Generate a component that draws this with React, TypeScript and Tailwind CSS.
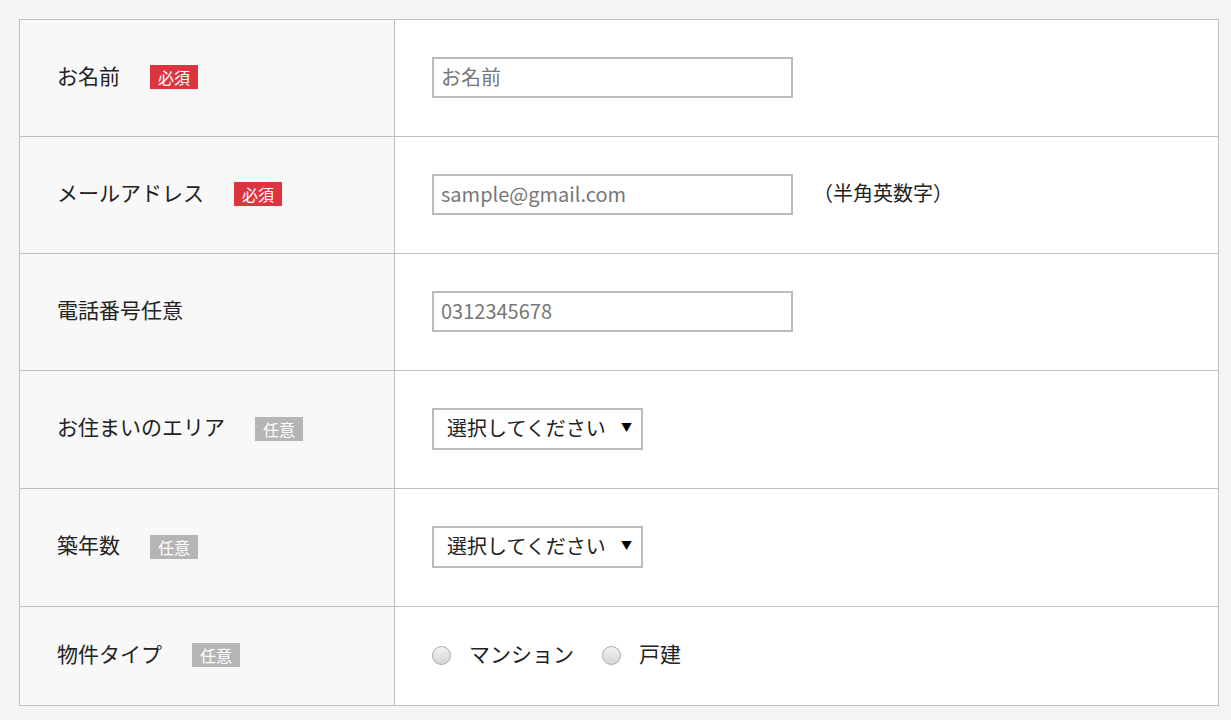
import React from "react";

type Badge = "required" | "optional" | null;

interface Row {
  label: string;
  badge: Badge;
  height: string;
  field: React.ReactNode;
}

function Tag({ kind }: { kind: Badge }) {
  if (!kind) return null;
  return (
    <span
      className={`ml-[30px] inline-block h-6 px-2 text-[16px] leading-6 text-white ${
        kind === "required" ? "bg-[#dc3540]" : "bg-[#b5b5b5]"
      }`}
    >
      {kind === "required" ? "必須" : "任意"}
    </span>
  );
}

function TextInput({ placeholder }: { placeholder: string }) {
  return (
    <input
      type="text"
      placeholder={placeholder}
      className="h-[41px] w-[361px] border-2 border-[#bbbbbb] bg-white px-[7px] pb-[2px] text-[20px] text-[#333] outline-none placeholder:text-[#777]"
    />
  );
}

function SelectBox() {
  return (
    <div className="flex h-[42px] w-[211px] items-center justify-between border-2 border-[#bbbbbb] bg-white pb-[2px] pl-[13px] pr-[9px]">
      <span className="text-[20px] text-[#222]">選択してください</span>
      <span className="text-[11px] text-black">▼</span>
    </div>
  );
}

function Radio({ label }: { label: string }) {
  return (
    <label className="flex items-center">
      <span className="h-[19px] w-[19px] rounded-full border border-[#aaaaaa] bg-gradient-to-b from-[#f2f2f2] to-[#d6d6d6]" />
      <span className="ml-[18px] pb-[3px] text-[21px] text-[#222]">{label}</span>
    </label>
  );
}

const rows: Row[] = [
  {
    label: "お名前",
    badge: "required",
    height: "h-[117px]",
    field: <TextInput placeholder="お名前" />,
  },
  {
    label: "メールアドレス",
    badge: "required",
    height: "h-[117px]",
    field: (
      <div className="flex items-center">
        <TextInput placeholder="sample@gmail.com" />
        <span className="ml-[20px] pb-[3px] text-[20px] text-[#222]">（半角英数字）</span>
      </div>
    ),
  },
  {
    label: "電話番号任意",
    badge: null,
    height: "h-[117px]",
    field: <TextInput placeholder="0312345678" />,
  },
  {
    label: "お住まいのエリア",
    badge: "optional",
    height: "h-[118px]",
    field: <SelectBox />,
  },
  {
    label: "築年数",
    badge: "optional",
    height: "h-[118px]",
    field: <SelectBox />,
  },
  {
    label: "物件タイプ",
    badge: "optional",
    height: "h-[99px]",
    field: (
      <div className="flex items-center gap-[28px]">
        <Radio label="マンション" />
        <Radio label="戸建" />
      </div>
    ),
  },
];

export default function App() {
  return (
    <div
      className="min-h-screen bg-[#f4f4f4] px-[19px] pt-[19px]"
      style={{ fontFamily: '"Noto Sans CJK JP", "Noto Sans", sans-serif' }}
    >
      <div className="w-[1200px] border-b border-[#c0c0c0]">
        {rows.map((row) => (
          <div
            key={row.label}
            className={`flex ${row.height} border-x border-t border-[#c0c0c0]`}
          >
            <div className="flex w-[375px] items-center border-r border-[#c0c0c0] bg-[#f8f8f8] pb-[2px] pl-[37px]">
              <span className="pb-[3px] text-[21px] text-[#222]">{row.label}</span>
              <Tag kind={row.badge} />
            </div>
            <div className="flex flex-1 items-center bg-white pb-[2px] pl-[37px]">
              {row.field}
            </div>
          </div>
        ))}
      </div>
    </div>
  );
}
